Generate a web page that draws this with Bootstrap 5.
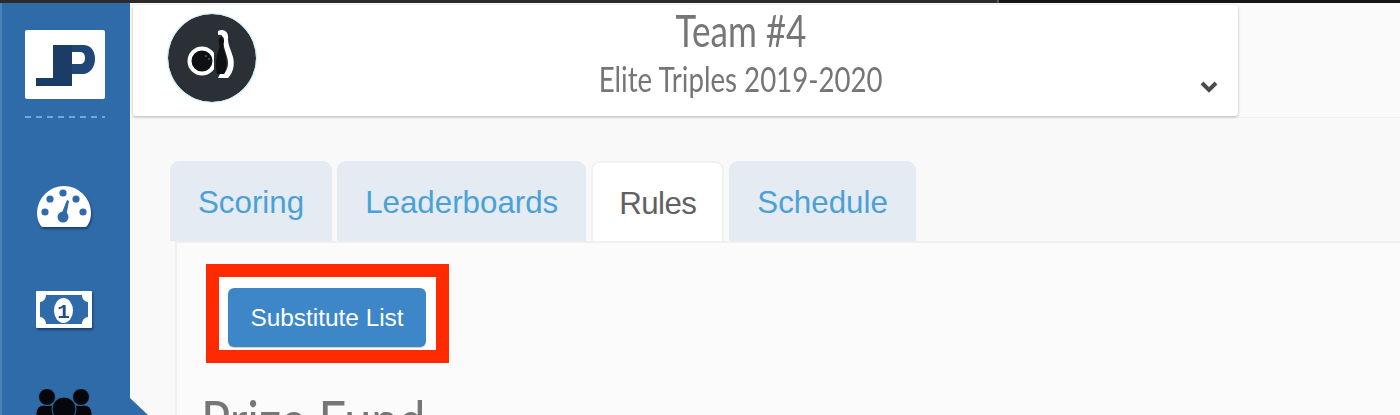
<!DOCTYPE html>
<html lang="en">
<head>
<meta charset="utf-8">
<title>Rules</title>
<link rel="stylesheet" href="https://cdn.jsdelivr.net/npm/bootstrap@5.3.0/dist/css/bootstrap.min.css">
<style>
html,body{height:415px;overflow:hidden}
body{background:#f9f9f9;font-family:"Liberation Sans",Arial,sans-serif}
.topline{height:3px;background:#2b2b2b}
.topline-end{width:403px;background:#151515;border-left:2px solid #555}
.shell{height:412px;position:relative}
.side{width:130px;background:#2e6ba8;border-left:2px solid #4a80b8}
.brand-box{width:80px;height:69px;margin-top:27px;margin-left:-2px;background:#fff;border-radius:2px;flex:none}
.brand-rule{width:80px;height:2px;flex:none;margin:17px 0 0 -2px;background:repeating-linear-gradient(90deg,#6fa8e0 0 6px,transparent 6px 11px)}
.side-ico{flex:none;margin-left:-4px;filter:drop-shadow(1px 2px 1px rgba(10,30,60,.55))}
.ico-gauge{margin-top:68px}
.ico-cash{margin-top:63px}
.ico-team{margin-top:61px;filter:none}
.side-notch{position:absolute;left:130px;top:395px;width:18px;height:17px;background:#2e6ba8;clip-path:polygon(0 0,100% 100%,0 100%)}
.content{min-width:0}
.head-strip{height:113px;border-bottom:1px solid #f1f1f1;background:#fafafa}
.team-card{width:1105px;height:111px;margin:2px 0 0 3px;border:0;border-radius:3px;box-shadow:0 1px 3px rgba(0,0,0,.28);position:relative}
.avatar{width:88px;height:88px;margin:9px 0 0 35px;flex:none;border-radius:50%;box-shadow:0 0 1px 1px #c9f1f7}
.team-title{width:100%;text-align:center;color:#767676;font-family:Lato,"Liberation Sans",sans-serif;padding-right:12px}
.narrow-one,.narrow-two{display:inline-block;white-space:nowrap}
.narrow-one{transform:scaleX(.78)}
.narrow-two{transform:scaleX(.79)}
.team-name{font-size:45px;line-height:50px}
.team-league{font-size:35px;line-height:40px;margin-top:3px}
.chev{position:absolute;right:19px;top:75px}
.tab-zone{padding:43px 0 0 40px}
.tabs-row{border:0;gap:5px;flex-wrap:nowrap}
.tabs-row .nav-link{height:80px;background:#e4ebf2;border:0;border-radius:9px 9px 0 0;color:#4ba1d6;font-size:31.3px;line-height:83px;padding:0 28px;margin:0}
.tabs-row .nav-link.active{background:#fff;color:#616161;border:2px solid #f1f1f1;border-bottom:0;line-height:81px;padding:0 26px;letter-spacing:-.6px}
.rule-panel{margin-left:5px;height:200px;background:#fbfbfb;border-top:2px solid #f0f0f0;border-left:2px solid #f0f0f0;padding:21px 0 0 29px}
.callout{width:243px;height:99px;border:13px solid #ff2a00;background:#fff;padding:11px 0 0 9px}
.callout .btn{width:198px;height:59px;background:#3d87c9;border:0;border-radius:6px;color:#fff;font-size:24.4px;line-height:59px;padding:0;box-shadow:0 1px 1px rgba(0,0,0,.2)}
.prize{font-family:Lato,"Liberation Sans",sans-serif;font-size:56px;color:#767676;line-height:60px;margin:27px 0 0 -5px;font-weight:400;transform-origin:left top;transform:scaleX(.867);white-space:nowrap}
</style>
</head>
<body>
<div class="topline d-flex justify-content-end"><div class="topline-end"></div></div>
<div class="shell d-flex">
  <aside class="side d-flex flex-column align-items-center flex-shrink-0">
    <div class="brand-box d-flex align-items-center justify-content-center">
      <svg width="80" height="69" viewBox="0 0 80 69"><path d="M11 48H28V15H47V56H11Z" fill="#1b3c66"/><path fill-rule="evenodd" d="M47 15H58C66 15 70 21 70 29C70 37 65 44 58 44H47V34H55C58 34 60 32 60 28C60 24 58 22 55 22H47Z" fill="#1f4676"/></svg>
    </div>
    <div class="brand-rule"></div>
    <svg class="side-ico ico-gauge" width="54" height="42" viewBox="0 0 54 42"><path d="M0 27A27 27 0 0 1 54 27C54 33 52 38 49 41H5C2 38 0 33 0 27Z" fill="#fff"/><g fill="#2e6ba8"><circle cx="13" cy="13" r="3.6"/><circle cx="26" cy="7" r="3.6"/><circle cx="39" cy="13" r="3.6"/><circle cx="8" cy="26" r="3.6"/><circle cx="46" cy="26" r="3.6"/><circle cx="26" cy="31" r="5.5"/><path d="M24 29L30 14L32 15L29 31Z"/></g></svg>
    <svg class="side-ico ico-cash" width="56" height="37" viewBox="0 0 56 37"><rect width="56" height="37" rx="1" fill="#fff"/><path d="M10 4H46C46 8 49 11 52 11V26C49 26 46 29 46 33H10C10 29 7 26 4 26V11C7 11 10 8 10 4Z" fill="#2e6ba8"/><ellipse cx="27.5" cy="19.5" rx="9.5" ry="12.5" fill="#fff"/><text x="27.5" y="27" text-anchor="middle" font-family="Liberation Mono" font-weight="700" font-size="21" fill="#1f4f85">1</text></svg>
    <svg class="side-ico ico-team" width="56" height="40" viewBox="0 0 56 40"><g fill="#05070c" stroke="#2e6ba8" stroke-width="1"><rect x="0" y="16" width="22" height="24" rx="8"/><rect x="34" y="16" width="22" height="24" rx="8"/><circle cx="11" cy="8" r="8.5"/><circle cx="45" cy="8" r="8.5"/><circle cx="28" cy="20" r="12"/><rect x="13" y="30" width="30" height="10"/></g></svg>
  </aside>
  <div class="side-notch"></div>
  <main class="content flex-grow-1">
    <div class="head-strip">
      <div class="card team-card d-flex flex-row">
        <svg class="avatar" viewBox="0 0 88 88"><circle cx="44" cy="44" r="44" fill="#2b2f36"/><circle cx="34" cy="47" r="12.5" fill="#0e1014" stroke="#fff" stroke-width="4"/><circle cx="38" cy="42" r=".9" fill="#5a6270"/><circle cx="41" cy="45" r=".9" fill="#5a6270"/><path d="M46 36H52V62H46Z" fill="#2b2f36"/><path d="M50 17C56 14 61 18 60 25C60 31 63 36 65 43C67 51 65 59 60 64H50L52 60H56C60 55 61 49 59 43C57 36 55 31 55 25C55 21 53 20 50 21Z" fill="#fff"/><path d="M54 23C51 23 50 26 51 29C52 32 51 34 50 38C48 44 47 52 49 60H56C59 54 59 46 57 40C55 34 55 30 56 28C56 25 56 23 54 23Z" fill="#0e1014"/></svg>
        <div class="team-title">
          <div class="team-name"><span class="narrow-one">Team #4</span></div>
          <div class="team-league"><span class="narrow-two">Elite Triples 2019-2020</span></div>
        </div>
        <svg class="chev" width="20" height="14" viewBox="0 0 20 14"><path d="M3 3L10 10L17 3" fill="none" stroke="#4b4b4b" stroke-width="4"/></svg>
      </div>
    </div>
    <div class="tab-zone">
      <ul class="nav nav-tabs tabs-row">
        <li class="nav-item"><a class="nav-link" href="#">Scoring</a></li>
        <li class="nav-item"><a class="nav-link" href="#">Leaderboards</a></li>
        <li class="nav-item"><a class="nav-link active" href="#">Rules</a></li>
        <li class="nav-item"><a class="nav-link" href="#">Schedule</a></li>
      </ul>
      <div class="rule-panel">
        <div class="callout"><a class="btn btn-primary" href="#">Substitute List</a></div>
        <h2 class="prize">Prize Fund</h2>
      </div>
    </div>
  </main>
</div>
</body>
</html>
